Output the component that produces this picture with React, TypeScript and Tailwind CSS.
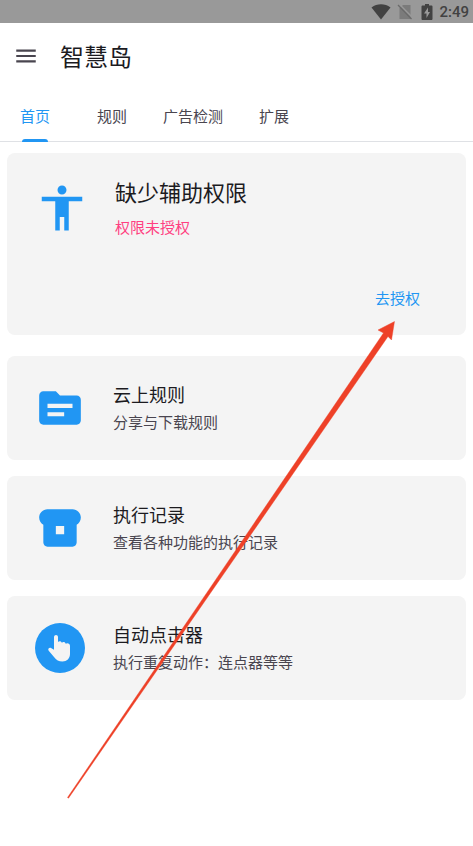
import type { ReactNode } from 'react'
import { MdAccessibility, MdBreakfastDining, MdMenu, MdTopic } from 'react-icons/md'

const TABS = ['首页', '规则', '广告检测', '扩展']

function StatusBar() {
  return (
    <div className="flex h-[23px] items-center justify-end bg-[#999999] pr-1 text-[#424242]">
      <svg className="mr-1.5 h-4 w-5" viewBox="0 0 20 16" aria-hidden="true">
        <path d="M.5 3.6C6 -.8 14 -.8 19.500 3.600L10 15.500z" fill="currentColor" />
      </svg>
      <svg className="mr-2 h-4 w-4" viewBox="0 0 16 16" aria-hidden="true">
        <path d="M6 1h7.500v14H2.500V4.500z" fill="#7b7b7b" />
        <path d="M2 0l14 14" stroke="#999999" strokeWidth="1.500" />
        <path d="M1 1l13.500 14" stroke="#6a6a6a" strokeWidth="1.300" />
      </svg>
      <svg className="mr-1.5 h-4 w-3" viewBox="0 0 12 16" aria-hidden="true">
        <path
          d="M4 0h4v1.500h2.500c.5 0 1 .5 1 1V15c0 .5-.5 1-1 1h-9c-.5 0-1-.5-1-1V2.500c0-.5.5-1 1-1H4z"
          fill="currentColor"
        />
        <path d="M7 3.500L3 9.500h2.500V14L9 8H7z" fill="#999999" />
      </svg>
      <span className="font-['Roboto',sans-serif] text-[15px] leading-5 font-medium">2:49</span>
    </div>
  )
}

function Tabs() {
  return (
    <nav className="flex h-[50px] border-b border-[#dfe1e5] pl-0.5">
      {TABS.map((tab, i) => (
        <button
          key={tab}
          className={
            i === 0
              ? 'relative mr-[11px] px-[18px] text-[15px] text-[#2196f3]'
              : 'px-[18px] text-[15px] text-[#49454f]'
          }
        >
          {tab}
          {i === 0 && (
            <span className="absolute inset-x-5 -bottom-px h-[3px] rounded-t-[3px] bg-[#2196f3]" />
          )}
        </button>
      ))}
    </nav>
  )
}

interface FeatureCardProps {
  icon: ReactNode
  title: string
  description: string
}

function FeatureCard({ icon, title, description }: FeatureCardProps) {
  return (
    <section className="flex h-[104px] items-center rounded-lg bg-[#f4f4f4] pl-7">
      <div className="mr-7 h-[50px] w-[50px] shrink-0 text-[#2196f3]">{icon}</div>
      <div>
        <h2 className="text-[18px] leading-7 text-[#1c1b1f]">{title}</h2>
        <p className="text-[15px] leading-7 text-[#49454f]">{description}</p>
      </div>
    </section>
  )
}

function HandIcon() {
  return (
    <svg className="h-full w-full" viewBox="0 0 50 50" aria-hidden="true">
      <circle cx="25" cy="25" r="25" fill="currentColor" />
      <path
        d="M19 14c0-2.800 4-2.800 4 0v5c1-1.300 3.400-1 3.900.8 1.100-1.200 3.300-.8 3.800.9 1.600-1.200 4.300-.4 4.300 2.200V31c0 4.500-3.200 7.500-7.500 7.500-3.800 0-6.200-1.500-8.500-4.500l-5.300-6.200c-1.300-1.700.4-3.600 2.300-2.800l3 1.700z"
        fill="#f4f4f4"
      />
    </svg>
  )
}

export default function App() {
  return (
    <div className="relative min-h-screen bg-white font-['Noto_Sans_CJK_SC',sans-serif]">
      <StatusBar />
      <header className="flex h-[69px] items-center pb-1 pl-[13px]">
        <button aria-label="菜单" className="mr-[21px] text-[#49454f]">
          <MdMenu className="h-[26px] w-[26px]" />
        </button>
        <h1 className="text-[24px] leading-8 text-[#1c1b1f]">智慧岛</h1>
      </header>
      <Tabs />
      <main className="flex flex-col gap-4 px-[7px] pt-[11px]">
        <section className="mb-[5px] flex h-[182px] flex-col rounded-lg bg-[#f4f4f4] pt-[22px]">
          <div className="flex pl-7">
            <MdAccessibility className="mt-1.5 mr-[26px] h-[54px] w-[54px] text-[#2196f3]" />
            <div>
              <h2 className="text-[22px] leading-8 text-[#1c1b1f]">缺少辅助权限</h2>
              <p className="mt-2 text-[15px] leading-6 text-[#ff4081]">权限未授权</p>
            </div>
          </div>
          <button className="mt-auto mr-[46px] mb-[25px] self-end text-[15px] leading-6 text-[#2196f3]">
            去授权
          </button>
        </section>
        <FeatureCard icon={<MdTopic className="h-full w-full" />} title="云上规则" description="分享与下载规则" />
        <FeatureCard
          icon={<MdBreakfastDining className="h-full w-full" />}
          title="执行记录"
          description="查看各种功能的执行记录"
        />
        <FeatureCard icon={<HandIcon />} title="自动点击器" description="执行重复动作：连点器等等" />
      </main>
      <svg
        className="pointer-events-none absolute top-[320px] left-[66px] h-[480px] w-[332px]"
        viewBox="66 320 332 480"
        aria-hidden="true"
      >
        <path
          d="M67.500 797.500L383.500 333l-5.500-3 16.500-8.500L391.500 340l-3.500-3.500L68.500 798.200z"
          fill="#ee4128"
          stroke="#ee4128"
          strokeWidth=".4"
        />
      </svg>
    </div>
  )
}
